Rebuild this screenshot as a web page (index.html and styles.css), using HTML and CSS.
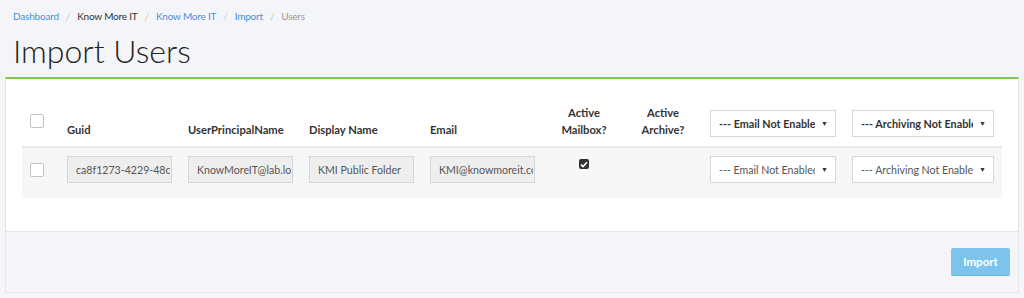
FILE: index.html
```html
<!DOCTYPE html>
<html lang="en">
<head>
<meta charset="utf-8">
<title>Import Users</title>
<link rel="stylesheet" href="styles.css">
</head>
<body>
<div class="page">
  <nav class="breadcrumb">
    <a class="crumb link" href="#">Dashboard</a><span class="sep">/</span>
    <span class="crumb plain">Know More IT</span><span class="sep">/</span>
    <a class="crumb link" href="#">Know More IT</a><span class="sep">/</span>
    <a class="crumb link" href="#">Import</a><span class="sep">/</span>
    <span class="crumb current">Users</span>
  </nav>
  <h1 class="title">Import Users</h1>
  <div class="card">
    <div class="card-body">
      <table class="grid">
        <colgroup>
          <col class="c-check"><col class="c-in"><col class="c-in"><col class="c-in"><col class="c-in2">
          <col class="c-mb"><col class="c-ar"><col class="c-s1"><col class="c-s2">
        </colgroup>
        <thead>
          <tr>
            <th class="mid"><span class="box"></span></th>
            <th>Guid</th>
            <th>UserPrincipalName</th>
            <th>Display Name</th>
            <th>Email</th>
            <th class="center">Active<br>Mailbox?</th>
            <th class="center">Active<br>Archive?</th>
            <th><div class="sel head s1"><span class="sel-text">--- Email Not Enabled ---</span><span class="arrow">&#9660;</span></div></th>
            <th><div class="sel head s2"><span class="sel-text">--- Archiving Not Enabled ---</span><span class="arrow">&#9660;</span></div></th>
          </tr>
        </thead>
        <tbody>
          <tr>
            <td class="mid"><span class="box"></span></td>
            <td><input class="field" type="text" value="ca8f1273-4229-48c0-9a1b" readonly></td>
            <td><input class="field" type="text" value="KnowMoreIT@lab.local" readonly></td>
            <td><input class="field" type="text" value="KMI Public Folder" readonly></td>
            <td><input class="field" type="text" value="KMI@knowmoreit.com" readonly></td>
            <td class="center"><span class="checked"><svg width="8" height="7" viewBox="0 0 8 7"><path d="M1 3.6 L3 5.5 L7 1.2" fill="none" stroke="#fff" stroke-width="1.6"/></svg></span></td>
            <td></td>
            <td><div class="sel s1"><span class="sel-text">--- Email Not Enabled ---</span><span class="arrow">&#9660;</span></div></td>
            <td><div class="sel s2"><span class="sel-text">--- Archiving Not Enabled ---</span><span class="arrow">&#9660;</span></div></td>
          </tr>
        </tbody>
      </table>
    </div>
    <div class="card-footer">
      <button class="btn" type="button">Import</button>
    </div>
  </div>
</div>
</body>
</html>
```
FILE: styles.css
```css
html, body {
  margin: 0;
  padding: 0;
  background: #f4f5f8;
  font-family: "Lato", "Noto Sans", sans-serif;
  color: #333;
}
.page {
  padding: 0 5px;
}
.breadcrumb {
  padding: 9px 8px 0;
  font-size: 10px;
  letter-spacing: -0.2px;
  line-height: 14px;
  display: flex;
  align-items: center;
}
.crumb { text-decoration: none; }
.link { color: #4a8fd8; }
.plain { color: #333; }
.current { color: #999; }
.sep {
  color: #c8c8c8;
  padding: 0 7px;
}
.title {
  margin: 8px 0 0 8px;
  font-size: 32px;
  font-weight: 300;
  line-height: 40px;
  color: #222;
  height: 46px;
}
.card {
  border: 1px solid #e3e5e9;
  border-top: 2px solid #7dc94a;
  background: #fff;
}
.card-body {
  padding: 17px 16px 33px;
}
.grid {
  width: 980px;
  table-layout: fixed;
  border-collapse: collapse;
  font-size: 11.2px;
}
.c-check { width: 37px; }
.c-in { width: 121px; }
.c-in2 { width: 122px; }
.c-mb { width: 80px; }
.c-ar { width: 78px; }
.c-s1 { width: 142px; }
.c-s2 { width: 158px; }
.grid th {
  padding: 8px;
  text-align: left;
  vertical-align: bottom;
  font-weight: 700;
  line-height: 17px;
  color: #333;
  border-bottom: 2px solid #e8e9ec;
}
.grid th.center, .grid td.center { text-align: center; }
.grid th.mid, .grid td.mid { vertical-align: middle; }
.grid tbody tr { background: #f5f6f8; }
.grid td {
  padding: 8px 8px 15px;
  vertical-align: top;
}
.box {
  display: block;
  width: 12px;
  height: 12px;
  border: 1px solid #c4c4c4;
  border-radius: 2px;
  background: #fff;
}
.checked {
  display: inline-flex;
  align-items: center;
  justify-content: center;
  width: 10px;
  height: 10px;
  margin-top: 3px;
  background: #333;
  border-radius: 2px;
}
.field {
  display: block;
  box-sizing: border-box;
  width: 105px;
  height: 27px;
  margin: 0;
  padding: 0 1px 0 8px;
  border: 1px solid #d6d6d6;
  background: #eeeeee;
  color: #555;
  font-family: inherit;
  font-size: 10.6px;
  outline: none;
}
.sel {
  position: relative;
  box-sizing: border-box;
  height: 27px;
  border: 1px solid #d6d6d6;
  background: #fff;
  display: flex;
  align-items: center;
  padding: 0 20px 0 8px;
  overflow: hidden;
  white-space: nowrap;
  font-weight: 400;
  color: #555;
  font-size: 10.6px;
}
.sel.s1 { width: 126px; }
.sel.s2 { width: 142px; }
.sel.head { font-weight: 700; color: #333; font-size: 10.8px; margin-bottom: 1px; }
.sel-text { overflow: hidden; flex: 1; min-width: 0; }
.arrow {
  position: absolute;
  right: 7px;
  top: 8px;
  font-size: 7px;
  line-height: 9px;
  color: #333;
}
.card-footer {
  border-top: 1px solid #e3e5e9;
  background: #f4f5f8;
  padding: 16px 8px 16px;
  display: flex;
  justify-content: flex-end;
}
.btn {
  width: 59px;
  height: 28px;
  border: 0;
  border-bottom: 1px solid #6cb3dc;
  border-radius: 2px;
  background: #7cc4ec;
  color: #fff;
  font-family: inherit;
  font-weight: 700;
  font-size: 11.5px;
  padding: 0;
}
```
